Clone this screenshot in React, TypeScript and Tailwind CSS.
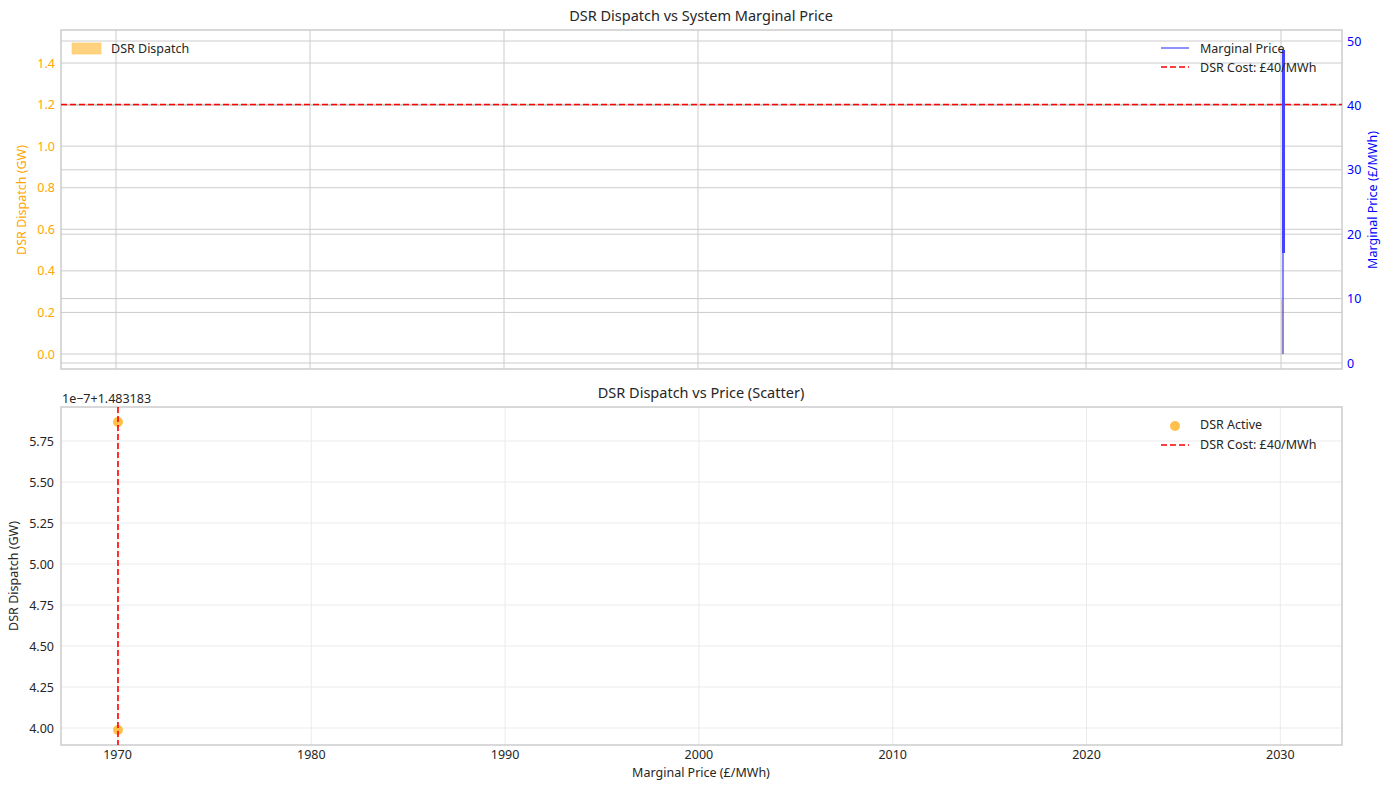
import React from "react";

const xs = [116, 310, 504, 698, 892, 1086, 1281];

function Top() {
  const lt = [0, 0.2, 0.4, 0.6, 0.8, 1.0, 1.2, 1.4];
  const rt = [0, 10, 20, 30, 40, 50];
  return (
    <svg width={1389} height={380} className="font-['Liberation_Sans',Arial,sans-serif]">
      <text x={701} y={21} fontSize={14.5} textAnchor="middle" fill="#262626">DSR Dispatch vs System Marginal Price</text>
      {xs.map((x) => <line key={x} x1={x} x2={x} y1={30} y2={369} stroke="#cccccc" />)}
      {lt.map((v) => { const y = 354 - v / 0.2 * 41.57; return <g key={v}><line x1={61} x2={1342} y1={y} y2={y} stroke="#cccccc" /><text x={55} y={y + 4.5} fontSize={12.5} textAnchor="end" fill="orange">{v.toFixed(1)}</text></g>; })}
      {rt.map((v) => { const y = 363 - v / 10 * 64.4; return <g key={v}><line x1={61} x2={1342} y1={y} y2={y} stroke="#cccccc" /><text x={1347} y={y + 4.5} fontSize={12.5} fill="blue">{v}</text></g>; })}
      <rect x={61} y={30} width={1281} height={339} fill="none" stroke="#cccccc" strokeWidth={1.5} />
      <line x1={61} x2={1342} y1={104.5} y2={104.5} stroke="red" strokeWidth={1.6} strokeDasharray="6 3" />
      <line x1={1283.5} x2={1283.5} y1={50} y2={253} stroke="#4444ff" strokeWidth={3} />
      <line x1={1283} x2={1283} y1={253} y2={354} stroke="#4444ff" strokeWidth={1.3} />
      <line x1={1282} x2={1282} y1={300} y2={354} stroke="#c08060" strokeWidth={0.6} />
      <text transform="translate(26,200) rotate(-90)" fontSize={12.5} textAnchor="middle" fill="orange">DSR Dispatch (GW)</text>
      <text transform="translate(1377,200) rotate(-90)" fontSize={12.5} textAnchor="middle" fill="blue">Marginal Price (£/MWh)</text>
      <rect x={72} y={43} width={29} height={11} fill="#ffd27f" stroke="#ffc860" strokeWidth={0.6} />
      <text x={111} y={53} fontSize={12.5} fill="#262626">DSR Dispatch</text>
      <line x1={1161} x2={1189} y1={48} y2={48} stroke="#4444ff" strokeWidth={1.2} />
      <text x={1200} y={53} fontSize={12.5} fill="#262626">Marginal Price</text>
      <line x1={1161} x2={1189} y1={67} y2={67} stroke="red" strokeWidth={1.6} strokeDasharray="6 3" />
      <text x={1200} y={72} fontSize={12.5} fill="#262626">DSR Cost: £40/MWh</text>
    </svg>
  );
}

function Bottom() {
  const yt = ["5.75", "5.50", "5.25", "5.00", "4.75", "4.50", "4.25", "4.00"];
  const yrs = [1970, 1980, 1990, 2000, 2010, 2020, 2030];
  return (
    <svg width={1389} height={410} className="font-['Liberation_Sans',Arial,sans-serif]">
      <g transform="translate(0,-380)">
        <text x={701} y={398} fontSize={14.5} textAnchor="middle" fill="#262626">DSR Dispatch vs Price (Scatter)</text>
        <text x={62} y={403} fontSize={12.5} fill="#262626">1e−7+1.483183</text>
        {yrs.map((yr, i) => { const x = 117.5 + i * 193.8; return <g key={yr}><line x1={x} x2={x} y1={407} y2={745} stroke="#ebebeb" /><text x={x} y={759} fontSize={12.5} textAnchor="middle" fill="#262626">{yr}</text></g>; })}
        {yt.map((t, i) => { const y = 441 + i * 41; return <g key={t}><line x1={61} x2={1342} y1={y} y2={y} stroke="#ebebeb" /><text x={54} y={y + 4.5} fontSize={12.5} textAnchor="end" fill="#262626">{t}</text></g>; })}
        <rect x={61} y={407} width={1281} height={338} fill="none" stroke="#cccccc" strokeWidth={1.5} />
        <circle cx={118} cy={422} r={5} fill="orange" fillOpacity={0.7} />
        <circle cx={118} cy={730} r={5} fill="orange" fillOpacity={0.7} />
        <line x1={118} x2={118} y1={407} y2={745} stroke="red" strokeWidth={1.6} strokeDasharray="6 3" />
        <text x={701} y={777} fontSize={12.5} textAnchor="middle" fill="#262626">Marginal Price (£/MWh)</text>
        <text transform="translate(18,576) rotate(-90)" fontSize={12.5} textAnchor="middle" fill="#262626">DSR Dispatch (GW)</text>
        <circle cx={1175} cy={426} r={5} fill="orange" fillOpacity={0.7} />
        <text x={1200} y={429} fontSize={12.5} fill="#262626">DSR Active</text>
        <line x1={1161} x2={1189} y1={445} y2={445} stroke="red" strokeWidth={1.6} strokeDasharray="6 3" />
        <text x={1200} y={449} fontSize={12.5} fill="#262626">DSR Cost: £40/MWh</text>
      </g>
    </svg>
  );
}

export default function App() {
  return (
    <div className="flex flex-col bg-white w-[1389px] h-[790px] overflow-hidden">
      <Top />
      <Bottom />
    </div>
  );
}
